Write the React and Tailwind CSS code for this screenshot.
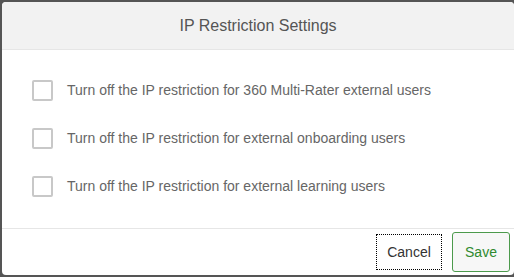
import React from 'react';

const options = [
  'Turn off the IP restriction for 360 Multi-Rater external users',
  'Turn off the IP restriction for external onboarding users',
  'Turn off the IP restriction for external learning users',
];

export default function App() {
  return (
    <div
      className="w-[514px] h-[277px] bg-[#555] pt-[2px] pl-[2px] pb-[2px] overflow-hidden"
      style={{ fontFamily: '"Liberation Sans", Arial, sans-serif' }}
    >
      <div className="w-[512px] h-[273px] bg-white rounded-[4px] flex flex-col overflow-hidden">
        {/* Header */}
        <div className="h-[48px] shrink-0 bg-[#f2f2f2] border-b border-[#e6e6e6] flex items-center justify-center">
          <span className="text-[16px] text-[#555]">IP Restriction Settings</span>
        </div>

        {/* Options */}
        <div className="h-[178px] shrink-0 pt-[16px] flex flex-col">
          {options.map((label) => (
            <label key={label} className="h-[48px] flex items-center pl-[30px]">
              <span className="w-[21px] h-[21px] border-2 border-[#c8c8c8] rounded-[2px] bg-white shrink-0" />
              <span className="ml-[14px] text-[14px] text-[#666]">{label}</span>
            </label>
          ))}
        </div>

        {/* Footer */}
        <div className="h-[47px] shrink-0 border-t border-[#e6e6e6] flex items-center justify-end pr-[4px] gap-[10px]">
          <button className="w-[66px] h-[36px] border border-dotted border-black text-[14px] text-[#333] bg-white">
            Cancel
          </button>
          <button className="w-[58px] h-[40px] border border-[#4c9a4c] rounded-[3px] bg-[#f7f7f7] text-[14px] text-[#2f8a2f]">
            Save
          </button>
        </div>
      </div>
    </div>
  );
}
